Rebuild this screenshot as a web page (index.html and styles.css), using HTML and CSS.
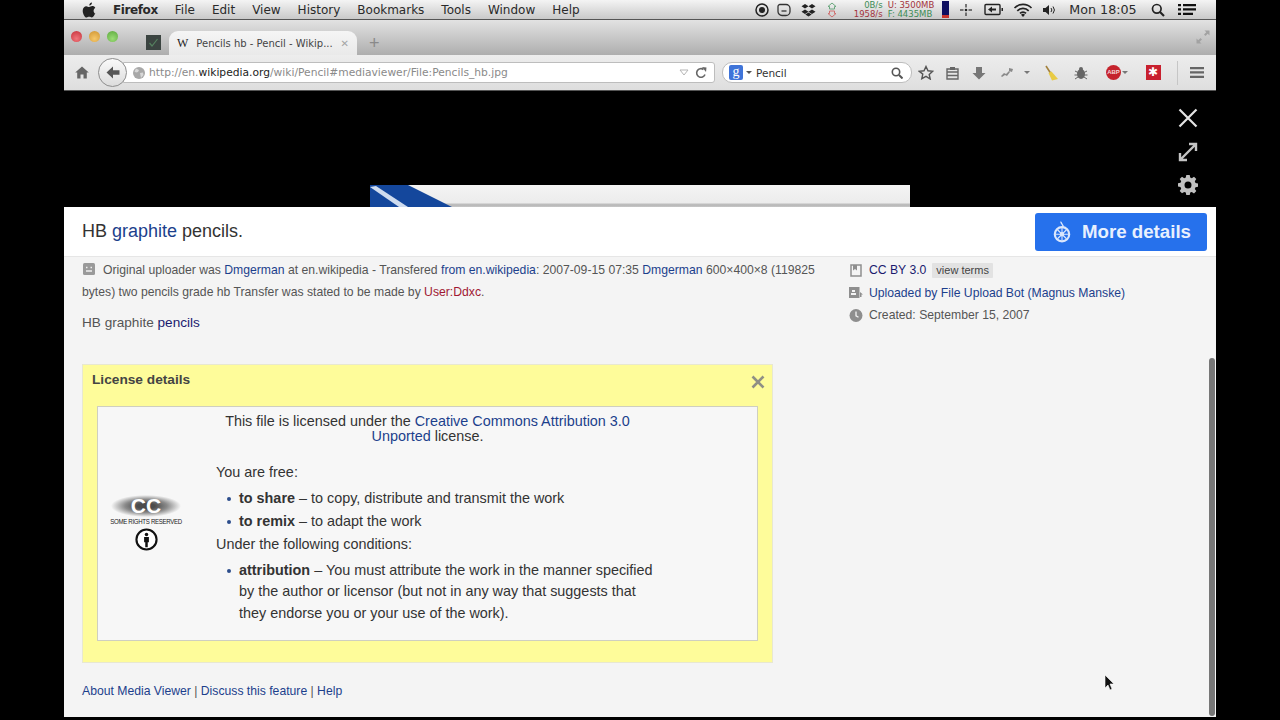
FILE: index.html
```html
<!DOCTYPE html>
<html lang="en">
  <head>
    <meta charset="UTF-8" />
    <meta name="viewport" content="width=device-width, initial-scale=1.0" />
    <title>Pencils hb - Pencil - Wikipedia</title>
    <link rel="stylesheet" href="styles.css">
  </head>
  <body>
    <div class="screen">
      <!-- mac menu bar -->
      <div class="menubar">
        <nav class="menus">
          <svg class="apple" width="14" height="16" viewBox="0 0 14 16"><path fill="#222" d="M10 0.500c.1 1.300-.9 2.900-2.700 3 -.2-1.500 1.100-2.800 2.700-3zM13.300 11.300c-.7 1.700-2.100 4.200-3.500 4.200-1 0-1.400-.7-2.600-.7s-1.700.7-2.600.7C2.800 15.500.7 11.700.7 8.700c0-2.900 1.900-4.500 3.600-4.500 1.100 0 2 .8 2.800.8s1.900-.9 3.200-.9c.6 0 2.100.2 3 1.600-2.400 1.500-2 4.900 0 6.100z"/></svg>
          <span class="menu-app">Firefox</span>
          <span>File</span>
          <span>Edit</span>
          <span>View</span>
          <span>History</span>
          <span>Bookmarks</span>
          <span>Tools</span>
          <span>Window</span>
          <span>Help</span>
        </nav>
        <div class="status">
          <svg width="14" height="14" viewBox="0 0 14 14"><circle cx="7" cy="7" r="6" fill="none" stroke="#222" stroke-width="1.500"/><circle cx="7" cy="7" r="3" fill="#222"/></svg>
          <svg width="14" height="14" viewBox="0 0 14 14"><path fill="none" stroke="#333" stroke-width="1.300" d="M3 1.500h6a4 4 0 0 1 4 4v3a4 4 0 0 1-4 4H5a4 4 0 0 1-4-4v-5a2 2 0 0 1 2-2z"/><path stroke="#333" stroke-width="1.300" d="M4.500 8h5"/></svg>
          <svg width="15" height="14" viewBox="0 0 15 14"><path fill="#222" d="M4 1l3.500 2.300L4 5.600.5 3.300zM11 1l3.500 2.300L11 5.600 7.500 3.300zM4 6.400l3.500 2.300L4 11 .5 8.700zM11 6.400l3.500 2.300L11 11 7.500 8.700zM4.300 11.600l3.200-2 3.200 2-3.200 2z"/></svg>
          <svg width="12" height="16" viewBox="0 0 12 16"><path fill="none" stroke="#6aa77e" d="M6 1l4 3.500H8.500V7h-5V4.500H2z"/><path fill="none" stroke="#cf6f6f" d="M3.500 9h5v2.500H10L6 15l-4-3.500h1.500z"/></svg>
          <div class="netstats">
            <div class="net-col">
              <span class="net-green">0B/s</span>
              <span class="net-red">1958/s</span>
            </div>
            <div class="net-col net-left">
              <span class="net-red">U: 3500MB</span>
              <span class="net-green">F: 4435MB</span>
            </div>
          </div>
          <div class="battery"><div class="battery-low"></div></div>
          <svg width="14" height="14" viewBox="0 0 14 14"><path fill="#444" d="M6 1h2v3.500H6zM6 9.500h2V13H6zM1 6h3.500v2H1zM9.500 6H13v2H9.500z" opacity=".7"/><circle cx="7" cy="7" r="1.300" fill="#222"/></svg>
          <svg width="20" height="13" viewBox="0 0 20 13"><rect x="1" y="1.500" width="15" height="10" rx="1" fill="none" stroke="#222" stroke-width="1.400"/><path fill="#222" d="M4 6.500l4-3v2h4v2H8v2zM17.500 5h1.500v3h-1.500z"/></svg>
          <svg width="20" height="14" viewBox="0 0 20 14"><path fill="none" stroke="#222" stroke-width="1.700" d="M1.500 5a12 12 0 0 1 17 0M4.300 7.800a8 8 0 0 1 11.400 0M7 10.400a4.200 4.200 0 0 1 6 0"/><path fill="#222" d="M10 14l-2-2.200a2.800 2.800 0 0 1 4 0z"/></svg>
          <svg width="14" height="12" viewBox="0 0 14 12"><path fill="#222" d="M1 4h2.500L7 1v10L3.500 8H1z"/><path fill="none" stroke="#222" d="M9 4a3 3 0 0 1 0 4M11 2.500a5.500 5.500 0 0 1 0 7"/></svg>
          <span class="clock">Mon 18:05</span>
          <svg width="14" height="14" viewBox="0 0 14 14"><circle cx="5.800" cy="5.800" r="4.300" fill="none" stroke="#222" stroke-width="1.700"/><path stroke="#222" stroke-width="2.200" d="M9 9l4 4"/></svg>
          <svg width="20" height="13" viewBox="0 0 20 13"><path fill="#111" d="M1 1h3v2.300H1zM6 1h13v2.300H6zM1 5.300h3v2.300H1zM6 5.300h13v2.300H6zM1 9.700h3V12H1zM6 9.700h10V12H6z"/></svg>
        </div>
      </div>

      <!-- firefox tabs -->
      <div class="tabbar">
        <div class="traffic">
          <span class="light light-red"></span>
          <span class="light light-yellow"></span>
          <span class="light light-green"></span>
        </div>
        <svg class="pinned" width="15" height="15" viewBox="0 0 15 15"><rect width="15" height="15" fill="#3b4441"/><path fill="none" stroke="#55805f" stroke-width="1.200" d="M3.500 8l2.500 3 5.500-7"/></svg>
        <div class="tab">
          <span class="tab-w">W</span>
          <span class="tab-title">Pencils hb - Pencil - Wikip...</span>
          <span class="tab-close">✕</span>
        </div>
        <span class="tab-new">+</span>
        <svg class="fullscreen" width="14" height="14" viewBox="0 0 14 14"><path fill="#a2a2a2" d="M8.500 0.500h5v5l-1.800-1.800L9.500 6 8 4.500l2.300-2.200zM0.500 13.500v-5l1.800 1.800L4.500 8 6 9.500l-2.300 2.200 1.800 1.800z"/></svg>
      </div>

      <!-- firefox nav bar -->
      <div class="navbar">
        <svg class="home" width="14" height="13" viewBox="0 0 14 13"><path fill="#666" d="M7 0.500l6.800 6h-2v6H8.500V8.500h-3v4H2.200v-6H.2z"/></svg>
        <div class="back">
          <svg width="14" height="13" viewBox="0 0 14 13"><path fill="#555" d="M0.500 6.500L7 0.500v3.700h6.500v4.600H7v3.700z"/></svg>
        </div>
        <div class="urlbar">
          <svg width="12" height="12" viewBox="0 0 12 12"><circle cx="6" cy="6" r="6" fill="#a8a8a8"/><path fill="#d8d8d8" d="M3 1.500l3 1.500-1 2-2 .5-1.500-1zM7 6l3-.5.500 2.500-2.500 3z"/></svg>
          <span class="url"><span class="url-dim">http://en.</span><span class="url-host">wikipedia.org</span><span class="url-dim">/wiki/Pencil#mediaviewer/File:Pencils_hb.jpg</span></span>
          <svg class="url-drop" width="10" height="7" viewBox="0 0 10 7"><path fill="none" stroke="#b5b5b5" d="M1 1h8L5 6z"/></svg>
          <svg width="12" height="12" viewBox="0 0 12 12"><path fill="none" stroke="#666" stroke-width="1.600" d="M10 7.500A4.300 4.300 0 1 1 8.500 2.500"/><path fill="#666" d="M7 0l4.500.5-.5 4.500z"/></svg>
        </div>
        <div class="searchbar">
          <span class="search-g">g</span>
          <span class="search-arrow"></span>
          <span class="search-text">Pencil</span>
          <svg width="12" height="12" viewBox="0 0 12 12"><circle cx="5" cy="5" r="3.700" fill="none" stroke="#555" stroke-width="1.600"/><path stroke="#555" stroke-width="2" d="M8 8l3.500 3.500"/></svg>
        </div>
        <div class="toolbar">
          <svg width="16" height="15" viewBox="0 0 16 15"><path fill="none" stroke="#555" stroke-width="1.400" d="M8 1.500l2 4.300 4.700.5-3.500 3.100 1 4.600L8 11.300l-4.200 2.400 1-4.600L1.300 6.300 6 5.800z"/></svg>
          <svg width="13" height="14" viewBox="0 0 13 14"><path fill="none" stroke="#666" stroke-width="1.400" d="M1 3h11v10H1zM1 6h11M1 9.500h11"/><rect x="4" y="1" width="5" height="3" fill="#666"/></svg>
          <svg width="14" height="14" viewBox="0 0 14 14"><path fill="#777" d="M4 1h6v6h3.500L7 13.500.5 7H4z"/></svg>
          <svg width="14" height="12" viewBox="0 0 14 12"><path fill="#8a8a8a" d="M1 9l3-3 2 1 3-3 1 1-3 4-2-1-3 2zM9 1l4 1-1 3-3-1z"/></svg>
          <span class="tool-arrow"></span>
          <svg width="15" height="16" viewBox="0 0 15 16"><path stroke="#a3813c" stroke-width="1.600" d="M2 1l4.500 7"/><path fill="#e8cb45" d="M4.500 8l3-1.500L14 14l-6 1.500z"/></svg>
          <svg width="14" height="14" viewBox="0 0 14 14"><ellipse cx="7" cy="8" rx="4" ry="5" fill="#666"/><circle cx="7" cy="3" r="2" fill="#666"/><path stroke="#666" d="M1 5l3 1.500M13 5l-3 1.500M0.500 9h3M13.500 9h-3M1 13l3-2M13 13l-3-2"/></svg>
          <span class="abp">ABP</span>
          <span class="tool-arrow"></span>
          <span class="lastpass">✱</span>
          <span class="tool-sep"></span>
          <svg width="14" height="11" viewBox="0 0 14 11"><path fill="#666" d="M0 0h14v2.300H0zM0 4.300h14v2.300H0zM0 8.700h14V11H0z"/></svg>
        </div>
      </div>

      <!-- media viewer stage -->
      <div class="stage">
        <svg class="photo" width="540" height="22" viewBox="0 0 540 22">
          <defs>
            <linearGradient id="paper" x1="0" y1="0" x2="0" y2="1">
              <stop offset="0" stop-color="#f4f4f4"/>
              <stop offset=".8" stop-color="#ececec"/>
              <stop offset=".9" stop-color="#b5b5b5"/>
              <stop offset="1" stop-color="#c8c8c8"/>
            </linearGradient>
          </defs>
          <rect width="540" height="22" fill="url(#paper)"/>
          <path fill="#14479c" d="M0 0h38l44 22H0z"/>
          <path fill="#cfdcef" d="M0 2l6 -1 32 21h-9z"/>
        </svg>
        <div class="stage-actions">
          <svg width="20" height="20" viewBox="0 0 20 20"><path stroke="#e4e4e4" stroke-width="2.200" d="M1.500 1.500l17 17M18.500 1.500l-17 17"/></svg>
          <svg width="20" height="20" viewBox="0 0 20 20"><path fill="none" stroke="#c4c4c4" stroke-width="2.400" d="M11 2h7v7M18 2L2 18M2 11v7h7"/></svg>
          <svg width="20" height="20" viewBox="0 0 20 20"><path fill="#c0c0c0" fill-rule="evenodd" d="M8.300 0h3.400l.5 2.600 1.600.7L16 1.800l2.300 2.300-1.500 2.200.7 1.600 2.500.5v3.300l-2.500.5-.7 1.700 1.500 2.200-2.300 2.300-2.200-1.500-1.600.7-.5 2.600H8.300l-.5-2.600-1.600-.7L4 18.200l-2.300-2.300 1.500-2.200-.7-1.700L0 11.600V8.300l2.500-.5.700-1.600-1.500-2.200L4 1.800l2.200 1.500 1.600-.7zM10 6.500a3.500 3.500 0 1 0 0 7 3.500 3.500 0 0 0 0-7z"/></svg>
        </div>
      </div>

      <!-- title bar -->
      <div class="titlebar">
        <h1 class="title">HB <a href="#">graphite</a> pencils.</h1>
        <a class="more" href="#">
          <svg width="18" height="24" viewBox="0 0 20 25"><path fill="none" stroke="#dbe7fc" stroke-width="1.600" d="M9 1c-1 2 3 3 2 6"/><circle cx="10" cy="15" r="8" fill="none" stroke="#dbe7fc" stroke-width="2.400"/><circle cx="10" cy="15" r="2.400" fill="#dbe7fc"/><path stroke="#dbe7fc" stroke-width="1.200" d="M3 15h14M10 8v14M5 10l10 10M15 10L5 20"/></svg>
          More details
        </a>
      </div>

      <!-- metadata panel -->
      <div class="panel">
        <div class="meta">
          <div class="meta-main">
            <p class="desc"><svg class="desc-icon" width="12" height="12" viewBox="0 0 12 12"><rect width="12" height="12" rx="1.500" fill="#9a9a9a"/><path stroke="#f0f0f0" stroke-width="1.300" d="M3 4.500h1.500M7.500 4.500H9M3 8h6"/></svg>Original uploader was <a href="#">Dmgerman</a> at en.wikipedia - Transfered <a href="#">from en.wikipedia</a>: 2007-09-15 07:35 <a href="#">Dmgerman</a> 600×400×8 (119825<br>bytes) two pencils grade hb Transfer was stated to be made by <a class="redlink" href="#">User:Ddxc</a>.</p>
            <p class="caption">HB graphite <a class="visited" href="#">pencils</a></p>
          </div>
          <ul class="facts">
            <li>
              <svg width="12" height="13" viewBox="0 0 12 13"><path fill="none" stroke="#8e8e8e" stroke-width="1.500" d="M1 1h10v11H1z"/><path fill="#8e8e8e" d="M3 1h4v5.500L5 5 3 6.500z"/></svg>
              <a class="visited" href="#">CC BY 3.0</a>
              <span class="terms">view terms</span>
            </li>
            <li>
              <svg width="14" height="11" viewBox="0 0 14 11"><path fill="#8e8e8e" d="M0 0h10.500v11H0z"/><path fill="#f3f3f3" d="M3 3h3v2H3zM2 6h5v2H2z"/><path fill="#8e8e8e" d="M11 5l3 2.500h-1.500V10h-1.500z"/></svg>
              <a href="#">Uploaded by File Upload Bot (Magnus Manske)</a>
            </li>
            <li>
              <svg width="13" height="13" viewBox="0 0 13 13"><circle cx="6.500" cy="6.500" r="6.500" fill="#8e8e8e"/><path fill="none" stroke="#f3f3f3" stroke-width="1.300" d="M6.500 2.500v4.300l2.500 1.500"/></svg>
              <span>Created: September 15, 2007</span>
            </li>
          </ul>
        </div>

        <section class="license">
          <div class="license-head">
            <h2>License details</h2>
            <svg width="14" height="14" viewBox="0 0 14 14"><path stroke="#8f8f85" stroke-width="2.600" d="M1.500 1.500l11 11M12.500 1.500l-11 11"/></svg>
          </div>
          <div class="license-box">
            <div class="cc">
              <div class="cc-mark">CC</div>
              <div class="cc-rights">SOME RIGHTS RESERVED</div>
              <svg width="23" height="23" viewBox="0 0 24 24"><circle cx="12" cy="12" r="10.500" fill="#fff" stroke="#111" stroke-width="2.200"/><circle cx="12" cy="6.700" r="1.800" fill="#111"/><path fill="#111" d="M9.500 9.300h5v5.500h-1.200V20h-2.600v-5.200H9.500z"/></svg>
            </div>
            <div class="license-text">
              <p class="license-intro">This file is licensed under the <a href="#">Creative Commons Attribution 3.0<br>Unported</a> license.</p>
              <p class="license-free">You are free:</p>
              <ul class="license-list">
                <li><b>to share</b> – to copy, distribute and transmit the work</li>
                <li><b>to remix</b> – to adapt the work</li>
              </ul>
              <p class="license-cond">Under the following conditions:</p>
              <ul class="license-list">
                <li><b>attribution</b> – You must attribute the work in the manner specified<br>by the author or licensor (but not in any way that suggests that<br>they endorse you or your use of the work).</li>
              </ul>
            </div>
          </div>
        </section>

        <p class="foot"><a href="#">About Media Viewer</a> | <a href="#">Discuss this feature</a> | <a href="#">Help</a></p>

        <div class="scrollthumb"></div>
        <svg class="pointer" width="11" height="17" viewBox="0 0 11 17"><path fill="#111" stroke="#fff" stroke-width=".6" d="M1 1v13l3-3 2 5 2-1-2-5h4z"/></svg>
      </div>
    </div>
  </body>
</html>
```

FILE: styles.css
```css
html, body {
  margin: 0;
  height: 100%;
  background-color: #000;
  overflow: hidden;
}
body {
  font-family: "Liberation Sans", Arial, sans-serif;
  color: #333;
}
a {
  color: #1c3f8c;
  text-decoration: none;
}
p, h1, h2, ul {
  margin: 0;
  padding: 0;
}
.screen {
  width: 1152px;
  height: 717px;
  margin: 0 auto;
  display: flex;
  flex-direction: column;
  background-color: #f4f4f4;
}

/* menu bar */
.menubar {
  height: 19px;
  flex: none;
  display: flex;
  justify-content: space-between;
  align-items: center;
  background: linear-gradient(#f4f4f4, #c9c9c9);
  border-bottom: 1px solid #555;
  font-family: "DejaVu Sans", sans-serif;
  font-size: 12px;
  color: #2a2a2a;
}
.menus {
  display: flex;
  align-items: center;
  gap: 17px;
  padding-left: 18px;
}
.menu-app {
  font-weight: bold;
  letter-spacing: -0.4px;
}
.status {
  display: grid;
  grid-template-columns: 20px 23px 26px 22px 95px 14px 28px 28px 30px 22px 86px 24px 34px;
  justify-items: center;
  align-items: center;
  padding-right: 12px;
}
.netstats {
  display: flex;
  gap: 5px;
  padding-left: 7px;
  font-size: 8.500px;
  line-height: 9px;
}
.net-col {
  display: flex;
  flex-direction: column;
  align-items: flex-end;
}
.net-left {
  align-items: flex-start;
}
.net-green {
  color: #3d8c55;
}
.net-red {
  color: #a3333d;
}
.battery {
  width: 7px;
  height: 17px;
  background-color: #101060;
  display: flex;
  align-items: flex-end;
}
.battery-low {
  width: 100%;
  height: 3px;
  background-color: #c8342c;
}
.clock {
  font-size: 12.700px;
  color: #2a2a2a;
}

/* tabs */
.tabbar {
  height: 35px;
  flex: none;
  display: flex;
  align-items: flex-end;
  background: linear-gradient(#e2e2e2, #aeaeae);
  box-sizing: border-box;
  position: relative;
}
.traffic {
  display: flex;
  gap: 7px;
  align-self: flex-start;
  padding: 11px 0 0 7px;
}
.light {
  width: 11px;
  height: 11px;
  border-radius: 50%;
}
.light-red {
  background: radial-gradient(circle at 50% 70%, #f0757a, #c5303a);
}
.light-yellow {
  background: radial-gradient(circle at 50% 70%, #f5c76a, #cf9430);
}
.light-green {
  background: radial-gradient(circle at 50% 70%, #9bdc76, #5ba83c);
}
.pinned {
  align-self: flex-start;
  margin: 15px 0 0 28px;
}
.tab {
  width: 172px;
  height: 24px;
  margin-left: 8px;
  padding: 0 8px;
  display: flex;
  align-items: center;
  background: linear-gradient(#f5f5f5, #e9e9e9);
  border-radius: 9px 9px 0 0;
  font-family: "DejaVu Sans", sans-serif;
  font-size: 10px;
  color: #444;
}
.tab-w {
  font-family: "Liberation Serif", serif;
  font-size: 12px;
  margin-right: 8px;
  color: #222;
}
.tab-title {
  flex: 1;
  white-space: nowrap;
}
.tab-close {
  color: #a5a5a5;
  font-size: 10px;
  font-weight: bold;
}
.tab-new {
  align-self: flex-end;
  margin: 0 0 2px 12px;
  color: #8a8a8a;
  font-size: 18px;
  line-height: 20px;
}
.fullscreen {
  margin-left: auto;
  margin-right: 6px;
  align-self: flex-start;
  padding-top: 10px;
}

/* nav bar */
.navbar {
  height: 36px;
  flex: none;
  box-sizing: border-box;
  display: flex;
  align-items: center;
  background: linear-gradient(#ededed, #dedede);
  border-bottom: 1px solid #555;
  padding-left: 11px;
}
.back {
  width: 27px;
  height: 27px;
  margin-left: 9px;
  border: 1px solid #8e8e8e;
  border-radius: 50%;
  background: linear-gradient(#fafafa, #dcdcdc);
  display: flex;
  align-items: center;
  justify-content: center;
  position: relative;
  z-index: 1;
  flex: none;
}
.urlbar {
  width: 592px;
  height: 21px;
  box-sizing: border-box;
  margin-left: -4px;
  padding: 0 7px 0 9px;
  display: flex;
  align-items: center;
  background-color: #fff;
  border: 1px solid #bdbdbd;
  border-radius: 0 3px 3px 0;
  font-size: 11px;
}
.url {
  margin-left: 4px;
  flex: 1;
  white-space: nowrap;
  font-family: "DejaVu Sans", sans-serif;
  font-size: 10.700px;
}
.url-dim {
  color: #8a8a8a;
}
.url-host {
  color: #222;
}
.url-drop {
  margin-right: 6px;
}
.searchbar {
  width: 190px;
  height: 21px;
  box-sizing: border-box;
  margin-left: 7px;
  padding: 0 8px 0 6px;
  display: flex;
  align-items: center;
  background-color: #fff;
  border: 1px solid #bdbdbd;
  border-radius: 10px;
  font-family: "DejaVu Sans", sans-serif;
  font-size: 10.500px;
  color: #333;
}
.search-g {
  width: 14px;
  height: 15px;
  background-color: #3f74d9;
  color: #fff;
  font-family: "Liberation Serif", serif;
  font-size: 14px;
  line-height: 13px;
  text-align: center;
  border-radius: 2px;
}
.search-arrow {
  width: 0;
  height: 0;
  margin: 0 4px 0 3px;
  border-left: 3px solid transparent;
  border-right: 3px solid transparent;
  border-top: 3px solid #555;
}
.search-text {
  flex: 1;
}
.toolbar {
  display: grid;
  grid-template-columns: 26px 26px 28px 28px 12px 36px 24px 28px 8px 48px 1px 38px;
  justify-items: center;
  align-items: center;
  margin-left: 1px;
}
.tool-arrow {
  width: 0;
  height: 0;
  border-left: 3px solid transparent;
  border-right: 3px solid transparent;
  border-top: 3px solid #777;
}
.abp {
  width: 15px;
  height: 15px;
  justify-self: end;
  background-color: #c5232c;
  border-radius: 50%;
  color: #f4d6d6;
  font-size: 6px;
  font-weight: bold;
  line-height: 15px;
  text-align: center;
}
.lastpass {
  width: 15px;
  height: 15px;
  background-color: #c8202e;
  color: #fff;
  font-size: 12px;
  line-height: 15px;
  text-align: center;
}
.tool-sep {
  width: 1px;
  height: 24px;
  background-color: #c6c6c6;
}

/* stage */
.stage {
  height: 116px;
  flex: none;
  background-color: #000;
  display: flex;
  align-items: flex-end;
  position: relative;
}
.photo {
  margin-left: 306px;
  display: block;
}
.stage-actions {
  position: absolute;
  top: 17px;
  right: 18px;
  display: flex;
  flex-direction: column;
  gap: 13.500px;
}
.stage-actions svg {
  display: block;
}

/* title bar */
.titlebar {
  height: 50px;
  flex: none;
  box-sizing: border-box;
  display: flex;
  align-items: flex-start;
  justify-content: space-between;
  background-color: #fff;
  border-bottom: 1px solid #e6e6e6;
  padding: 6px 9px 0 18px;
}
.title {
  font-size: 18px;
  font-weight: normal;
  line-height: 36px;
  color: #333;
}
.more {
  width: 172px;
  height: 38px;
  box-sizing: border-box;
  display: flex;
  align-items: center;
  justify-content: center;
  gap: 11px;
  padding-left: 2px;
  background-color: #2671ec;
  border-radius: 3px;
  color: #e8f0fe;
  font-size: 18.700px;
  font-weight: bold;
}

/* panel */
.panel {
  flex: 1;
  position: relative;
  padding: 0 18px;
  overflow: hidden;
}
.meta {
  display: flex;
  padding-top: 2px;
  gap: 32px;
  font-size: 12.200px;
  line-height: 22px;
  color: #555;
}
.meta-main {
  width: 735px;
  flex: none;
}
.desc-icon {
  margin: 0 8px 0 1px;
  vertical-align: -1px;
}
.caption {
  margin-top: 9px;
  font-size: 13.600px;
}
.redlink {
  color: #a01832;
}
.visited {
  color: #1a1a6e;
}
.facts {
  list-style: none;
  color: #555;
}
.facts li {
  display: flex;
  align-items: center;
  height: 22.500px;
}
.facts svg {
  width: 14px;
  margin-right: 6px;
  flex: none;
}
.terms {
  margin-left: 6px;
  padding: 0 4px;
  background-color: #e2e2e2;
  font-size: 11px;
  line-height: 15px;
  color: #444;
  border-radius: 1px;
}

/* license box */
.license {
  width: 691px;
  height: 299px;
  box-sizing: border-box;
  margin-top: 30px;
  background-color: #fefc9a;
  border: 1px solid #e8e8d0;
  padding: 0 14px;
}
.license-head {
  height: 41px;
  display: flex;
  align-items: flex-start;
  justify-content: space-between;
  margin-right: -7px;
  margin-left: -5px;
}
.license-head h2 {
  margin-top: 7px;
  font-size: 13.700px;
  color: #444;
}
.license-head svg {
  margin-top: 10px;
}
.license-box {
  height: 235px;
  box-sizing: border-box;
  background-color: #f7f7f7;
  border: 1px solid #cfcfc0;
  display: flex;
  font-size: 14.400px;
  line-height: 15px;
  color: #333;
}
.cc {
  width: 96px;
  flex: none;
  padding-top: 88px;
  display: flex;
  flex-direction: column;
  align-items: center;
}
.cc-mark {
  width: 70px;
  height: 22px;
  background: radial-gradient(ellipse closest-side, #4c4c4c 25%, #8a8a8a 60%, #f7f7f7 100%);
  color: #fff;
  font-size: 21px;
  font-weight: bold;
  line-height: 22px;
  text-align: center;
}
.cc-rights {
  font-size: 8px;
  line-height: 9px;
  letter-spacing: -0.4px;
  color: #222;
  margin-bottom: 2px;
  white-space: nowrap;
  transform: scaleX(0.76);
}
.license-text {
  width: 442px;
  padding: 7px 0 0 22px;
}
.license-intro {
  text-align: center;
  width: 423px;
}
.license-free {
  margin-top: 21px;
}
.license-list {
  margin-top: 8px;
  padding-left: 23px;
  list-style: none;
}
.license-list li {
  line-height: 21.500px;
  margin-bottom: 1.500px;
  white-space: nowrap;
  position: relative;
}
.license-list li::before {
  content: "";
  position: absolute;
  left: -12px;
  top: 9px;
  width: 4px;
  height: 4px;
  border-radius: 50%;
  background-color: #2c4d8c;
}
.license-cond {
  margin-top: 4px;
}
.license-list b {
  color: #333;
}
.foot {
  margin-top: 21px;
  font-size: 12.200px;
  line-height: 14px;
  color: #555;
}
.scrollthumb {
  position: absolute;
  right: 1px;
  top: 101px;
  width: 6px;
  height: 358px;
  background-color: #777;
  border-radius: 3px;
}
.pointer {
  position: absolute;
  left: 1040px;
  top: 417px;
}
```
